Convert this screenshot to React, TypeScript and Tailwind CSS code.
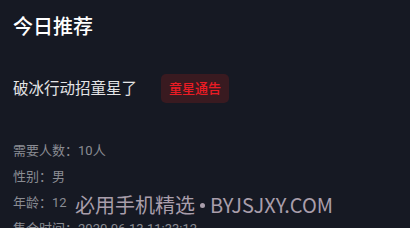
export default function App() {
  const details = [
    { label: '需要人数：', value: '10人' },
    { label: '性别：', value: '男' },
    { label: '年龄：', value: '12' },
    { label: '集合时间：', value: '2020-06-13 11:33:12' },
  ];

  return (
    <div className="relative w-[410px] h-[228px] overflow-hidden bg-[#161923] font-['Roboto','Noto_Sans_CJK_SC',sans-serif]">
      <div className="px-[13px] pt-[12px]">
        <h1 className="text-[20px] leading-[30px] font-medium text-white">今日推荐</h1>

        <div className="mt-[32px] flex items-center gap-[24px]">
          <span className="text-[15.5px] leading-[22px] text-[#e4e4e6]">破冰行动招童星了</span>
          <span className="h-[29px] px-[8px] flex items-center rounded-[5px] bg-[#391a20] text-[13px] font-medium text-[#ea1c24]">
            童星通告
          </span>
        </div>

        <div className="mt-[39px] flex flex-col gap-[8px]">
          {details.map((d) => (
            <div key={d.label} className="text-[13px] leading-[18px] text-[#8a8c93]">
              {d.label}
              {d.value}
            </div>
          ))}
        </div>
      </div>

      {/* watermark */}
      <div className="absolute left-[75px] top-[191px] flex items-center text-[20px] leading-[28px] text-[#a99eab] font-['Noto_Sans_CJK_SC',sans-serif] whitespace-nowrap">
        <span>必用手机精选</span>
        <span className="ml-[5px] mr-[5px] w-[5px] h-[5px] rounded-full bg-[#a99eab]" />
        <span>BYJSJXY.COM</span>
      </div>
    </div>
  );
}
